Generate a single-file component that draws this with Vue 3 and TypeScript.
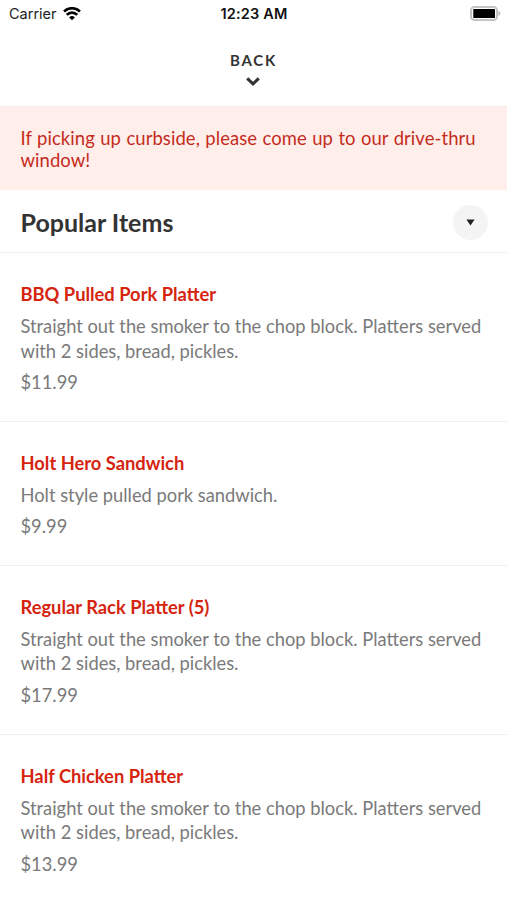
<script setup lang="ts">
interface MenuItem {
  name: string
  description: string
  price: string
}

const platter = 'Straight out the smoker to the chop block. Platters served with 2 sides, bread, pickles.'

const items: MenuItem[] = [
  { name: 'BBQ Pulled Pork Platter', description: platter, price: '$11.99' },
  { name: 'Holt Hero Sandwich', description: 'Holt style pulled pork sandwich.', price: '$9.99' },
  { name: 'Regular Rack Platter (5)', description: platter, price: '$17.99' },
  { name: 'Half Chicken Platter', description: platter, price: '$13.99' },
]
</script>

<template>
  <main class="screen">
    <div class="status">
      <div class="carrier">
        <span>Carrier</span>
        <svg width="18" height="14" viewBox="0 0 18 14" fill="none" stroke="#000" stroke-width="2.6">
          <path d="M1 4.500a11.400 11.400 0 0 1 16 0" />
          <path d="M3.800 7.800a7.300 7.300 0 0 1 10.400 0" />
          <path d="M9 13.300L6.200 10.400a4 4 0 0 1 5.600 0z" fill="#000" stroke="none" />
        </svg>
      </div>
      <span class="time">12:23 AM</span>
      <svg class="battery" width="31" height="15" viewBox="0 0 31 15">
        <rect x="1" y="1" width="26" height="13" rx="3.500" fill="#fff" stroke="#c4c4c4" stroke-width="2" />
        <rect x="3.300" y="3" width="21.700" height="9" rx=".6" />
        <path d="M28.500 5c2.500 .8 2.500 4.200 0 5z" fill="#b9b9b9" />
      </svg>
    </div>
    <header class="back">
      <span>BACK</span>
      <svg width="14" height="9" viewBox="0 0 14 9" fill="none" stroke="#333" stroke-width="3">
        <path d="M1.200 1.300L7 6.900l5.800-5.600" />
      </svg>
    </header>
    <p class="notice">If picking up curbside, please come up to our drive-thru window!</p>
    <div class="category">
      <h1>Popular Items</h1>
      <button class="toggle" aria-label="Choose category">
        <svg width="9" height="7" viewBox="0 0 9 7"><path d="M.4.500h8.200L4.500 6.500z" fill="#222" /></svg>
      </button>
    </div>
    <article v-for="item in items" :key="item.name" class="item">
      <h2>{{ item.name }}</h2>
      <p class="description">{{ item.description }}</p>
      <p class="price">{{ item.price }}</p>
    </article>
  </main>
</template>

<style>
body { margin: 0; background: #fff; }
</style>

<style scoped>
.screen { height: 900px; overflow: hidden; font-family: Lato, sans-serif; background: #fff; }
.status { display: grid; grid-template-columns: 1fr auto 1fr; align-items: center; height: 27px; padding: 0 6px 0 9px; box-sizing: border-box; font: 14.500px/27px Inter, sans-serif; color: #222; }
.carrier { display: flex; align-items: center; gap: 6px; }
.time { margin-right: 2px; color: #111; font-weight: 600; letter-spacing: .15px; }
.battery { justify-self: end; }
.back { display: flex; flex-direction: column; align-items: center; gap: 7px; height: 80px; padding: 23px 0 0; box-sizing: border-box; border-bottom: 1px solid #f5eeee; color: #333; font-size: 15px; font-weight: 700; line-height: 20px; letter-spacing: 1.800px; }
.back svg { margin-right: 1px; }
.notice { height: 83px; margin: 0; padding: 20px 20.500px 0; box-sizing: border-box; background: #ffeeea; color: #c52c1d; font-size: 18.450px; line-height: 22px; letter-spacing: .08px; word-spacing: .6px; }
.category { display: flex; align-items: center; justify-content: space-between; height: 63.400px; padding: 2px 19px 0 20.500px; box-sizing: border-box; border-bottom: 1px solid #eee; }
h1 { margin: 0; color: #333; font-size: 25px; font-weight: 700; line-height: 30px; }
.toggle { display: flex; align-items: center; justify-content: center; width: 35px; height: 35px; padding: 0; border: 0; border-radius: 50%; background: #f4f4f4; }
.item { padding: 28.700px 20.500px 26.500px; border-bottom: 1px solid #eee; font-size: 18.320px; line-height: 24.500px; color: #7a7a7a; }
h2 { margin: 0 0 7px; color: #d5240f; font-size: 18.320px; font-weight: 700; line-height: 25px; }
.item p { margin: 0; }
.item .price { margin-top: 7px; }
</style>
